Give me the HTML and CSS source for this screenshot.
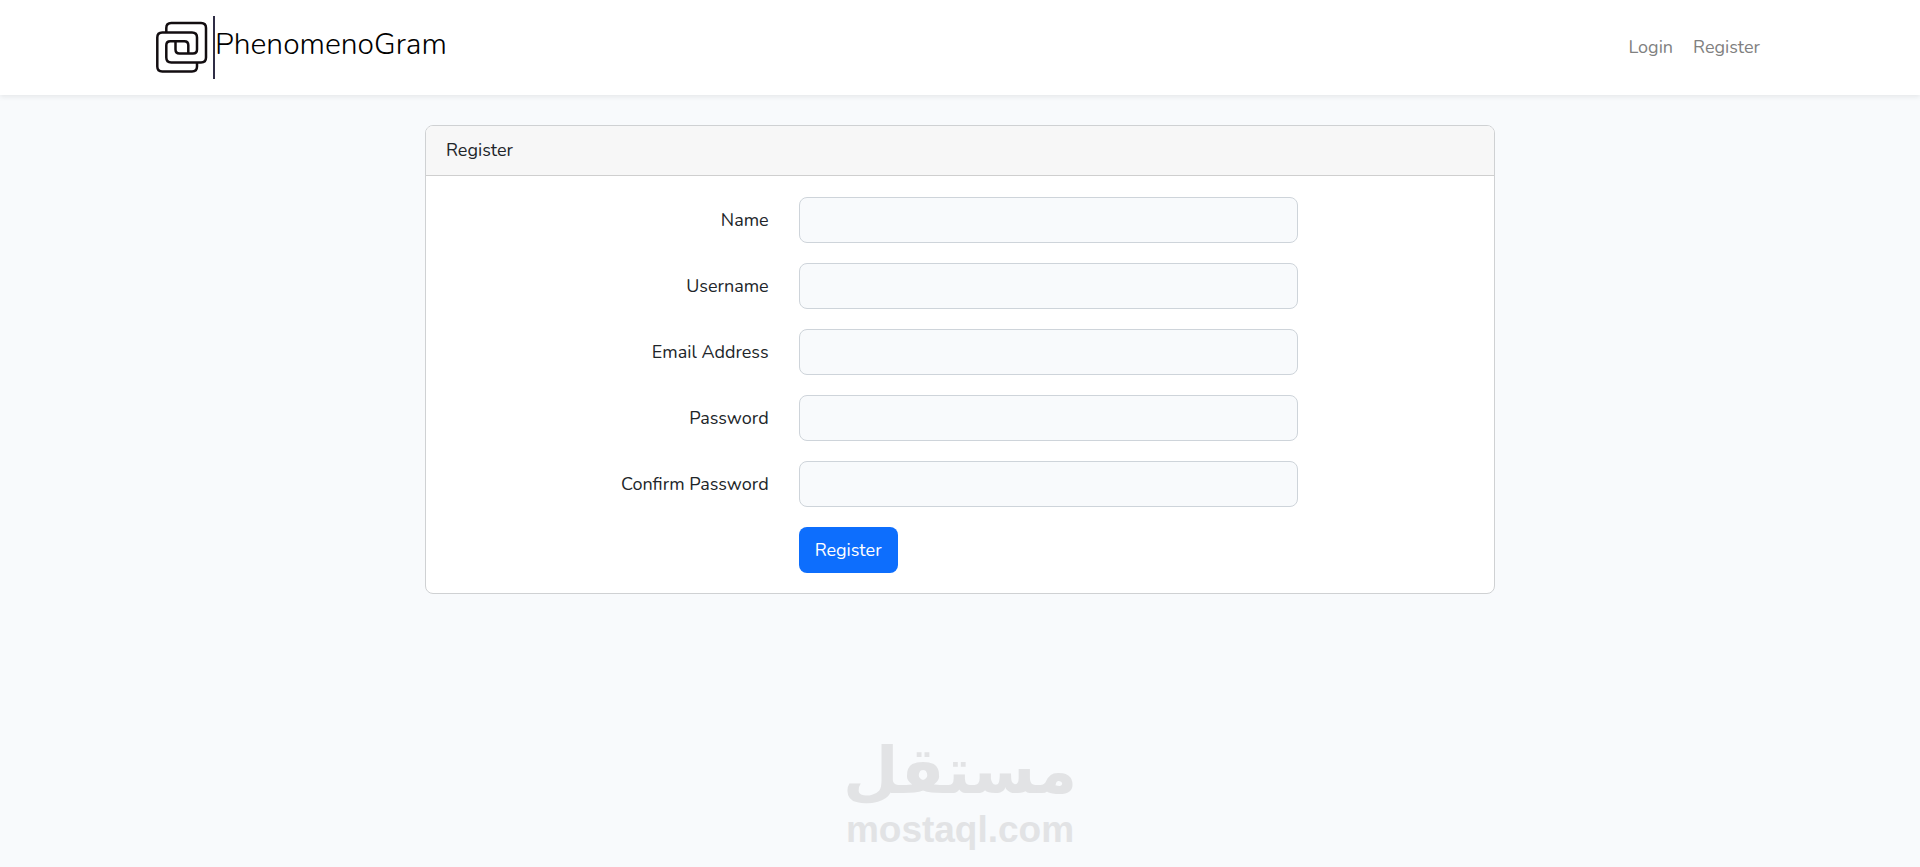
FILE: index.html
```html
<!DOCTYPE html>
<html lang="en">
<head>
  <meta charset="UTF-8" />
  <title>PhenomenoGram</title>
  <meta name="viewport" content="width=device-width, initial-scale=1" />
  <link rel="stylesheet" href="styles.css">
</head>
<body>
  <nav class="navbar">
    <div class="container">
      <a class="brand" href="#">
        <svg class="brand-logo" viewBox="0 0 63 63" aria-hidden="true">
          <path d="M16.3 16.500V12q0-5 5-5H51q5 0 5 5V41.500q0 5-5 5H21.300q-5 0-5-5V29.300q0-4 4-4H34.300q4 0 4 4V37.500" />
          <path d="M47 46.500V50.500q0 5-5 5H12.300q-5 0-5-5V21.500q0-5 5-5H42q5 0 5 5V33.500q0 4-4 4H29.500q-4 0-4-4V25.500" />
        </svg>
        <span class="brand-name">PhenomenoGram</span>
      </a>
      <div class="nav-links">
        <a href="#">Login</a>
        <a href="#">Register</a>
      </div>
    </div>
  </nav>

  <main class="page">
    <div class="card">
      <div class="card-header">Register</div>
      <form class="card-body">
        <div class="row">
          <label for="name">Name</label>
          <input type="text" id="name" required />
        </div>
        <div class="row">
          <label for="username">Username</label>
          <input type="text" id="username" required />
        </div>
        <div class="row">
          <label for="email">Email Address</label>
          <input type="email" id="email" required />
        </div>
        <div class="row">
          <label for="password">Password</label>
          <input type="password" id="password" required />
        </div>
        <div class="row">
          <label for="password-confirm">Confirm Password</label>
          <input type="password" id="password-confirm" required />
        </div>
        <div class="row">
          <button type="submit">Register</button>
        </div>
      </form>
    </div>
  </main>

  <footer class="watermark">
    <span class="watermark-ar" lang="ar" dir="rtl">مستقل</span>
    <span class="watermark-en">mostaql.com</span>
  </footer>
</body>
</html>
```
FILE: styles.css
```css
* {
  box-sizing: border-box;
}
body {
  margin: 0;
  min-height: 100vh;
  display: flex;
  flex-direction: column;
  font-family: Nunito, Lato, sans-serif;
  font-size: 18px;
  line-height: 28px;
  color: #212529;
  background: #f8fafc;
}
a {
  text-decoration: none;
}

/* navbar */
.navbar {
  background: #fff;
  padding: 16px 0;
  box-shadow: 0 2px 5px rgba(0, 0, 0, 0.075);
}
.container {
  max-width: 1650px;
  margin: 0 auto;
  padding: 0 15px;
  display: flex;
  align-items: center;
  justify-content: space-between;
}
.brand {
  display: flex;
  color: #000;
}
.brand-logo {
  width: 65px;
  height: 63px;
  border-right: 2px solid #2f2d45;
  fill: none;
  stroke: #120d10;
  stroke-width: 2.5;
}
.brand-name {
  font-size: 30px;
  font-weight: 300;
  line-height: 58px;
}
.nav-links {
  display: flex;
  gap: 20px;
  padding: 0 10px 2px;
}
.nav-links a {
  color: #808080;
}
.nav-links a:hover {
  color: #4d4d4d;
}

/* register card */
.page {
  padding: 30px 15px;
}
.card {
  max-width: 1070px;
  margin: 0 auto;
  background: #fff;
  border: 1px solid #cfd1d3;
  border-radius: 8px;
  overflow: hidden;
}
.card-header {
  padding: 10px 20px 11px;
  background: #f7f7f7;
  border-bottom: 1px solid #cfcfcf;
}
.card-body {
  padding: 21px 20px 20px;
  display: grid;
  gap: 20px;
}
.row {
  display: grid;
  grid-template-columns: repeat(12, 1fr);
  column-gap: 30px;
  align-items: center;
}
.row label {
  grid-column: span 4;
  text-align: right;
}
.row input {
  grid-column: span 6;
  width: 100%;
  height: 46px;
  padding: 8px 15px;
  font: inherit;
  color: inherit;
  background: #f8fafc;
  border: 1px solid #ced4da;
  border-radius: 8px;
}
.row input:focus {
  outline: none;
  border-color: #86b7fe;
}
.row button {
  grid-column: 5 / span 6;
  justify-self: start;
  height: 46px;
  padding: 0 16px;
  font: inherit;
  color: #fff;
  background: #0d6efd;
  border: none;
  border-radius: 8px;
  cursor: pointer;
}
.row button:hover {
  background: #0b5ed7;
}

/* watermark */
.watermark {
  margin-top: auto;
  padding-bottom: 16px;
  display: flex;
  flex-direction: column;
  align-items: center;
  font-weight: 700;
  color: #e2e3e5;
}
.watermark-ar {
  font-family: "DejaVu Sans", sans-serif;
  font-size: 64px;
  line-height: 76px;
}
.watermark-en {
  font-family: "Liberation Sans", Arial, sans-serif;
  font-size: 37px;
  line-height: 42px;
}
```
